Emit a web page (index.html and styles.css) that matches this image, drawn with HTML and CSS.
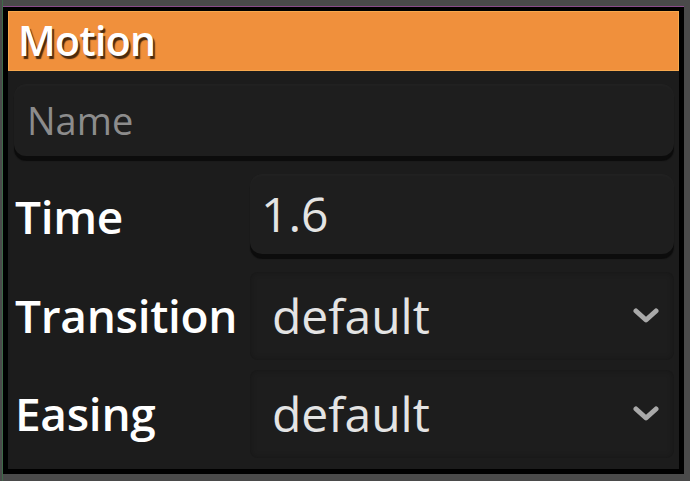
FILE: index.html
```html
<!DOCTYPE html>
<html>
<head>
<meta charset="utf-8">
<link rel="stylesheet" href="styles.css">
</head>
<body>
<div class="stage">
  <div class="panel">
    <div class="inner">
      <div class="header">Motion</div>
      <div class="content">
        <div class="field name-field"><span class="placeholder">Name</span></div>
        <div class="row row-time">
          <div class="label">Time</div>
          <div class="field value-field"><span class="value">1.6</span></div>
        </div>
        <div class="row row-trans">
          <div class="label">Transition</div>
          <div class="select"><span class="value">default</span>
            <svg class="chev" width="28" height="18" viewBox="0 0 28 18"><path d="M4 4 L14 13 L24 4" fill="none" stroke="#a9a9a9" stroke-width="5" stroke-linecap="round" stroke-linejoin="round"/></svg>
          </div>
        </div>
        <div class="row row-ease">
          <div class="label">Easing</div>
          <div class="select"><span class="value">default</span>
            <svg class="chev" width="28" height="18" viewBox="0 0 28 18"><path d="M4 4 L14 13 L24 4" fill="none" stroke="#a9a9a9" stroke-width="5" stroke-linecap="round" stroke-linejoin="round"/></svg>
          </div>
        </div>
      </div>
    </div>
  </div>
</div>
</body>
</html>
```
FILE: styles.css
```css
html, body {
  margin: 0;
  padding: 0;
}
body {
  width: 690px;
  height: 481px;
  overflow: hidden;
  background:
    linear-gradient(90deg, transparent 2px, #3e6a48 2px, #3e6a48 3px, transparent 3px),
    #4a4a4a;
  font-family: "Open Sans", "Noto Sans", sans-serif;
}
.stage {
  padding-top: 6px;
}
.panel {
  margin-left: 3px;
  width: 681px;
  height: 468px;
  box-sizing: border-box;
  border-top: 1px solid #8a4b8a;
  background: #000;
  padding: 4px 5px 5px 5px;
}
.inner {
  height: 100%;
  background: #1c1c1c;
  display: flex;
  flex-direction: column;
}
.header {
  height: 60px;
  box-sizing: border-box;
  background: #f0903c;
  border: 1px solid #f7a84e;
  color: #fff;
  font-size: 41px;
  font-weight: 600;
  line-height: 56px;
  padding-left: 9px;
  text-shadow: 2px 3px 1px #4a2a0e;
  letter-spacing: -0.7px;
}
.content {
  padding: 13px 5px 0 6px;
  display: flex;
  flex-direction: column;
}
.field {
  background: #1e1e1e;
  border-radius: 12px;
  box-shadow: 0 5px 1px #0c0c0c, inset 0 2px 3px rgba(255,255,255,0.02);
  display: flex;
  align-items: center;
}
.name-field {
  height: 72px;
  padding-left: 13px;
}
.placeholder {
  color: #8c8c8c;
  font-size: 38px;
}
.row {
  display: flex;
  align-items: center;
}
.row-time {
  margin-top: 18px;
}
.row-trans {
  margin-top: 13px;
}
.row-ease {
  margin-top: 10px;
}
.label {
  width: 235px;
  padding-left: 1px;
  color: #fff;
  font-size: 46px;
  font-weight: 600;
  letter-spacing: -0.3px;
  padding-bottom: 2px;
}
.value-field {
  flex: 1;
  height: 80px;
  padding-left: 11px;
  margin-bottom: 5px;
}
.value {
  color: #e4e4e4;
  font-size: 48px;
  padding-bottom: 2px;
}
.select {
  flex: 1;
  height: 88px;
  display: flex;
  align-items: center;
  justify-content: space-between;
  padding: 0 14px 0 22px;
  background: #1d1d1d;
  border-radius: 8px;
  box-shadow: inset 0 0 6px rgba(0,0,0,0.25);
}
.chev {
  filter: blur(0.6px);
}
```
